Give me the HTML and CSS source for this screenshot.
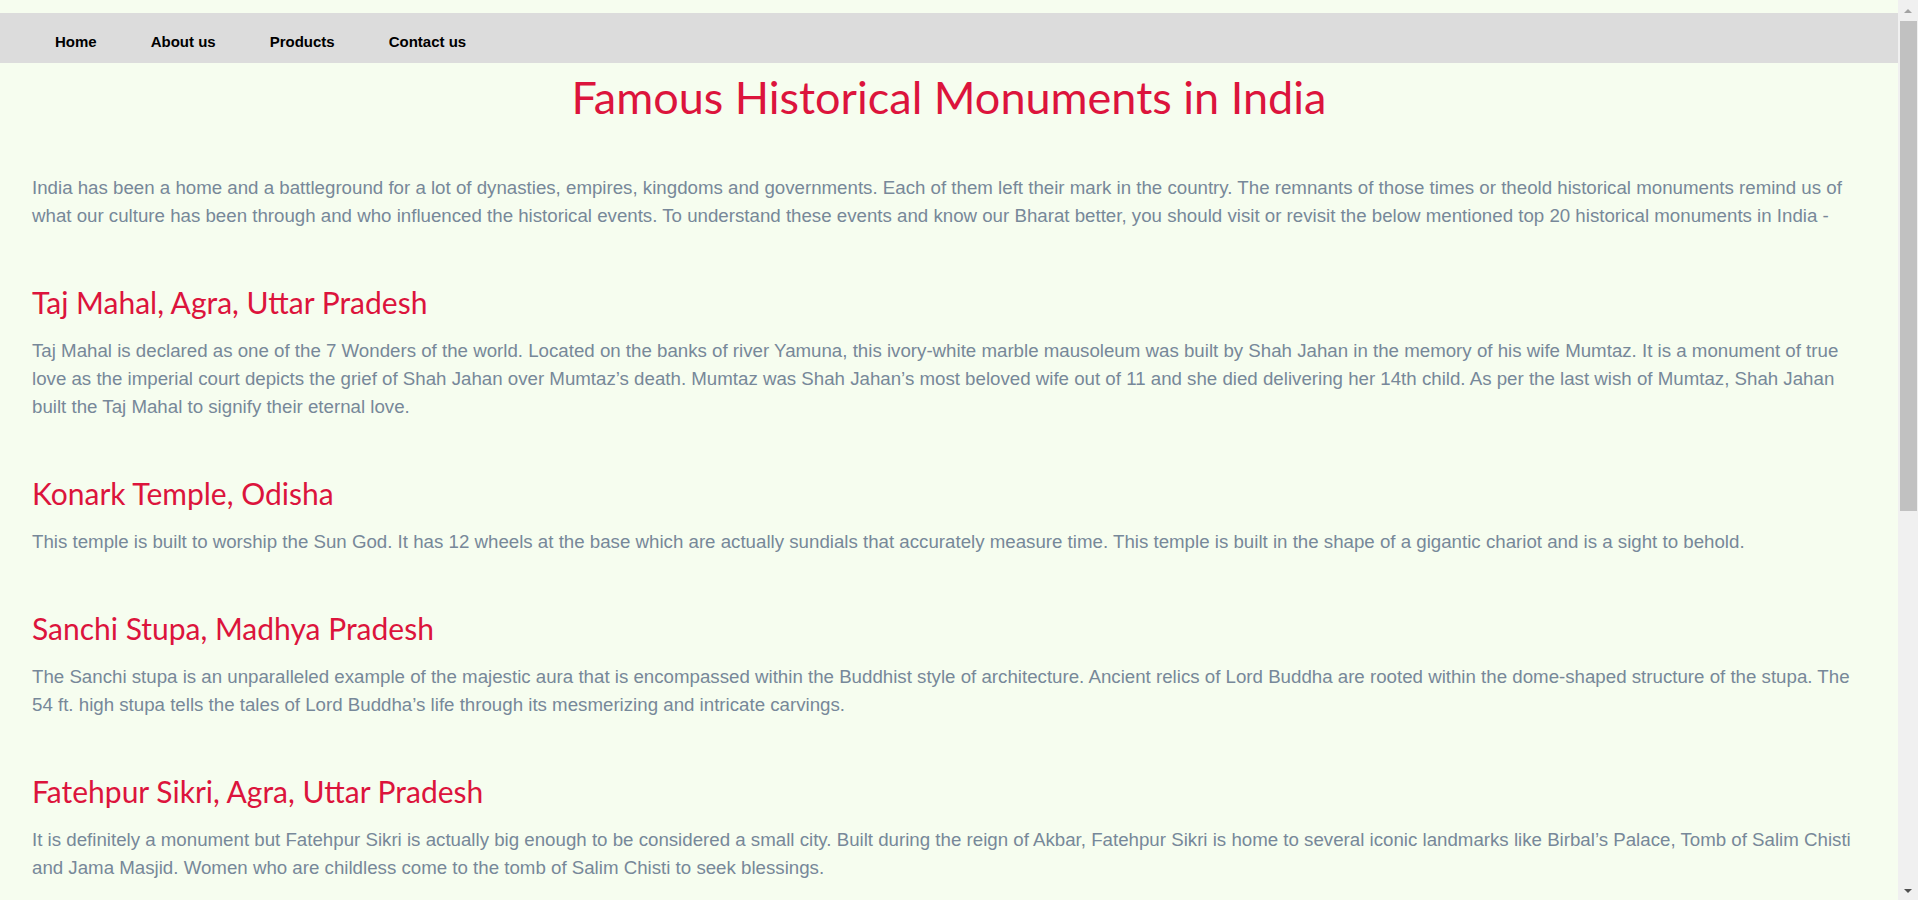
FILE: index.html
```html
<!DOCTYPE html>
<html lang="en">
<head>
<meta charset="utf-8">
<title>Famous Historical Monuments in India</title>
<link rel="stylesheet" href="styles.css">
</head>
<body>
<div class="window">
  <div class="page">
    <nav class="topnav">
      <a class="topnav-link" href="#">Home</a>
      <a class="topnav-link" href="#">About us</a>
      <a class="topnav-link" href="#">Products</a>
      <a class="topnav-link" href="#">Contact us</a>
    </nav>
    <main class="content">
      <h1 class="page-title">Famous Historical Monuments in India</h1>
      <p class="text">India has been a home and a battleground for a lot of dynasties, empires, kingdoms and governments. Each of them left their mark in the country. The remnants of those times or theold historical monuments remind us of what our culture has been through and who influenced the historical events. To understand these events and know our Bharat better, you should visit or revisit the below mentioned top 20 historical monuments in India -</p>

      <section class="monument">
        <h2 class="monument-title">Taj Mahal, Agra, Uttar Pradesh</h2>
        <p class="text">Taj Mahal is declared as one of the 7 Wonders of the world. Located on the banks of river Yamuna, this ivory-white marble mausoleum was built by Shah Jahan in the memory of his wife Mumtaz. It is a monument of true love as the imperial court depicts the grief of Shah Jahan over Mumtaz’s death. Mumtaz was Shah Jahan’s most beloved wife out of 11 and she died delivering her 14th child. As per the last wish of Mumtaz, Shah Jahan built the Taj Mahal to signify their eternal love.</p>
      </section>

      <section class="monument">
        <h2 class="monument-title">Konark Temple, Odisha</h2>
        <p class="text">This temple is built to worship the Sun God. It has 12 wheels at the base which are actually sundials that accurately measure time. This temple is built in the shape of a gigantic chariot and is a sight to behold.</p>
      </section>

      <section class="monument">
        <h2 class="monument-title">Sanchi Stupa, Madhya Pradesh</h2>
        <p class="text">The Sanchi stupa is an unparalleled example of the majestic aura that is encompassed within the Buddhist style of architecture. Ancient relics of Lord Buddha are rooted within the dome-shaped structure of the stupa. The 54 ft. high stupa tells the tales of Lord Buddha’s life through its mesmerizing and intricate carvings.</p>
      </section>

      <section class="monument">
        <h2 class="monument-title">Fatehpur Sikri, Agra, Uttar Pradesh</h2>
        <p class="text">It is definitely a monument but Fatehpur Sikri is actually big enough to be considered a small city. Built during the reign of Akbar, Fatehpur Sikri is home to several iconic landmarks like Birbal’s Palace, Tomb of Salim Chisti and Jama Masjid. Women who are childless come to the tomb of Salim Chisti to seek blessings.</p>
      </section>

      <section class="monument">
        <h2 class="monument-title">Qutub Minar, Delhi</h2>
        <p class="text">Qutub Minar is the tallest brick minaret in the world. Built by Qutb-ud-din Aibak and completed by his successors, this 73 metre high tower is decorated with intricate carvings and verses from the Quran.</p>
      </section>

      <section class="monument">
        <h2 class="monument-title">Red Fort, Delhi</h2>
        <p class="text">The Red Fort was the main residence of the Mughal emperors for nearly 200 years. Built by Shah Jahan with red sandstone, it is the place where the Prime Minister of India hoists the national flag every Independence Day.</p>
      </section>
    </main>
  </div>
  <div class="scrollbar" aria-hidden="true">
    <span class="scrollbar-arrow scrollbar-arrow-up"></span>
    <span class="scrollbar-thumb"></span>
    <span class="scrollbar-arrow scrollbar-arrow-down"></span>
  </div>
</div>
</body>
</html>
```

FILE: styles.css
```css
html {
  background: #f6fdef;
}

body {
  margin: 0;
  background: #f6fdef;
}

.window {
  display: flex;
  align-items: flex-start;
}

.page {
  flex: 1;
  min-width: 0;
  padding: 13px 0 40px;
}

/* fake browser scrollbar at the right edge */
.scrollbar {
  position: sticky;
  top: 0;
  flex: none;
  display: flex;
  flex-direction: column;
  align-items: center;
  width: 20px;
  height: 100vh;
  background: #f0f0f0;
}

.scrollbar-arrow {
  width: 0;
  height: 0;
  border-left: 4px solid transparent;
  border-right: 4px solid transparent;
}

.scrollbar-arrow-up {
  margin-top: 9px;
  border-bottom: 4px solid #a3a3a3;
}

.scrollbar-thumb {
  align-self: stretch;
  height: 490px;
  margin: 8px 1px 0 2px;
  background: #c1c1c1;
}

.scrollbar-arrow-down {
  margin-top: auto;
  margin-bottom: 7px;
  border-top: 4px solid #505050;
}

.topnav {
  display: flex;
  align-items: center;
  box-sizing: border-box;
  height: 50px;
  padding: 8px 0 0 28px;
  background: #dcdcdc;
}

.topnav-link {
  padding: 0 27px;
  font-family: "Liberation Sans", Arial, sans-serif;
  font-size: 15px;
  font-weight: bold;
  line-height: 20px;
  color: #000;
  text-decoration: none;
}

.content {
  padding: 0 32px;
}

.page-title {
  margin: 4px 0 47px;
  font-family: "Segoe UI", Lato, sans-serif;
  font-size: 45px;
  font-weight: normal;
  line-height: 60px;
  color: #dc143c;
  text-align: center;
}

.monument {
  margin-top: 52px;
}

.monument-title {
  margin: 0 0 15px;
  font-family: "Segoe UI", Lato, sans-serif;
  font-size: 30px;
  font-weight: normal;
  line-height: 40px;
  color: #dc143c;
}

.text {
  margin: 0;
  font-family: "Liberation Sans", Arial, sans-serif;
  font-size: 18.7px;
  line-height: 28px;
  color: #778899;
}
```
